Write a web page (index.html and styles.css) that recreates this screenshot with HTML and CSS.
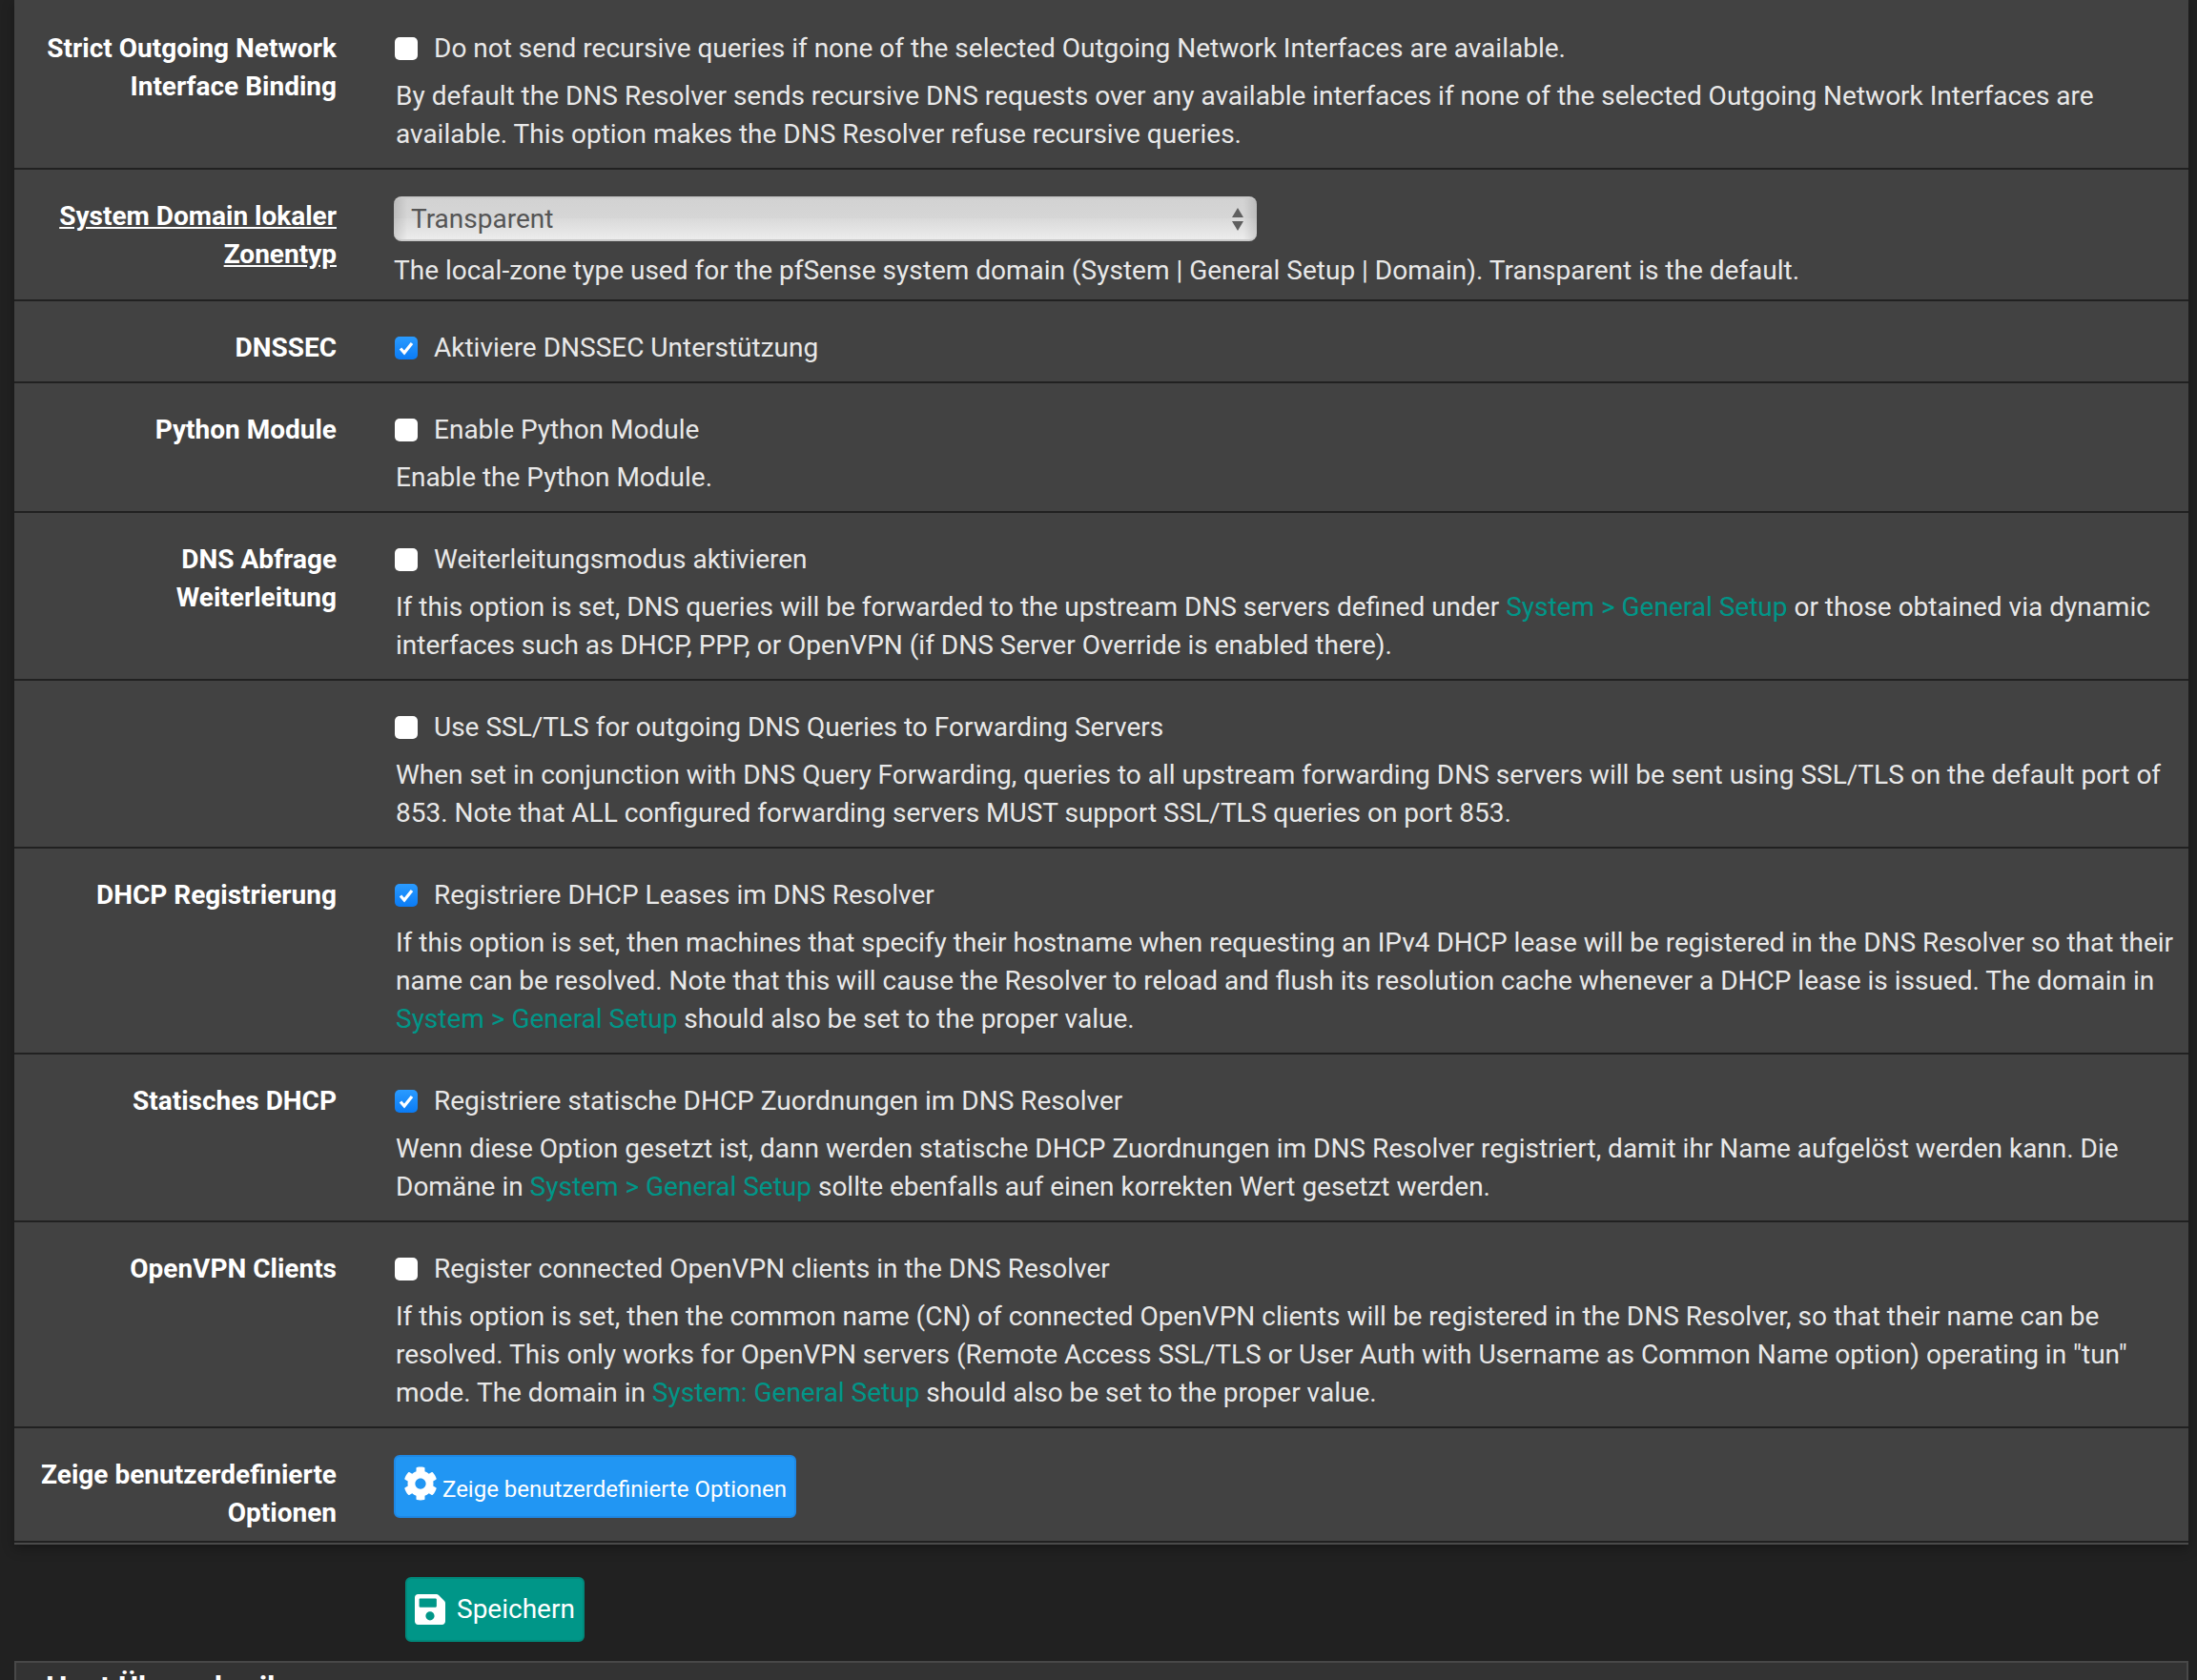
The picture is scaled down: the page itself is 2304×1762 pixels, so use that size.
FILE: index.html
```html
<!DOCTYPE html>
<html lang="en">
<head>
    <meta charset="UTF-8">
    <meta name="viewport" content="width=device-width, initial-scale=1.0">
    <title>DNS Resolver</title>
    <link rel="stylesheet" href="styles.css">
</head>
<body>
    <div class="panel">
        <div class="row">
            <div class="label">Strict Outgoing Network Interface Binding</div>
            <div class="field">
                <label class="check"><span class="box"></span>Do not send recursive queries if none of the selected Outgoing Network Interfaces are available.</label>
                <p class="help">By default the DNS Resolver sends recursive DNS requests over any available interfaces if none of the selected Outgoing Network Interfaces are available. This option makes the DNS Resolver refuse recursive queries.</p>
            </div>
        </div>
        <div class="row row-select">
            <div class="label"><span class="underline">System Domain lokaler Zonentyp</span></div>
            <div class="field">
                <div class="select">
                    <span>Transparent</span>
                    <svg class="arrows" width="14" height="24" viewBox="0 0 14 24"><path d="M7 0l6 10H1zM7 24L1 14h12z" fill="#5f5f5f"/></svg>
                </div>
                <p class="help help-tight">The local-zone type used for the pfSense system domain (System | General Setup | Domain). Transparent is the default.</p>
            </div>
        </div>
        <div class="row">
            <div class="label">DNSSEC</div>
            <div class="field">
                <label class="check"><span class="box on"><svg width="24" height="24" viewBox="0 0 24 24"><path d="M6 12.500l4 4.500 8-10" fill="none" stroke="#fff" stroke-width="3.200"/></svg></span>Aktiviere DNSSEC Unterstützung</label>
            </div>
        </div>
        <div class="row">
            <div class="label">Python Module</div>
            <div class="field">
                <label class="check"><span class="box"></span>Enable Python Module</label>
                <p class="help">Enable the Python Module.</p>
            </div>
        </div>
        <div class="row">
            <div class="label">DNS Abfrage Weiterleitung</div>
            <div class="field">
                <label class="check"><span class="box"></span>Weiterleitungsmodus aktivieren</label>
                <p class="help">If this option is set, DNS queries will be forwarded to the upstream DNS servers defined under <a href="#">System &gt; General Setup</a> or those obtained via dynamic interfaces such as DHCP, PPP, or OpenVPN (if DNS Server Override is enabled there).</p>
            </div>
        </div>
        <div class="row">
            <div class="label"></div>
            <div class="field">
                <label class="check"><span class="box"></span>Use SSL/TLS for outgoing DNS Queries to Forwarding Servers</label>
                <p class="help">When set in conjunction with DNS Query Forwarding, queries to all upstream forwarding DNS servers will be sent using SSL/TLS on the default port of 853. Note that ALL configured forwarding servers MUST support SSL/TLS queries on port 853.</p>
            </div>
        </div>
        <div class="row">
            <div class="label">DHCP Registrierung</div>
            <div class="field">
                <label class="check"><span class="box on"><svg width="24" height="24" viewBox="0 0 24 24"><path d="M6 12.500l4 4.500 8-10" fill="none" stroke="#fff" stroke-width="3.200"/></svg></span>Registriere DHCP Leases im DNS Resolver</label>
                <p class="help">If this option is set, then machines that specify their hostname when requesting an IPv4 DHCP lease will be registered in the DNS Resolver so that their name can be resolved. Note that this will cause the Resolver to reload and flush its resolution cache whenever a DHCP lease is issued. The domain in <a href="#">System &gt; General Setup</a> should also be set to the proper value.</p>
            </div>
        </div>
        <div class="row">
            <div class="label">Statisches DHCP</div>
            <div class="field">
                <label class="check"><span class="box on"><svg width="24" height="24" viewBox="0 0 24 24"><path d="M6 12.500l4 4.500 8-10" fill="none" stroke="#fff" stroke-width="3.200"/></svg></span>Registriere statische DHCP Zuordnungen im DNS Resolver</label>
                <p class="help">Wenn diese Option gesetzt ist, dann werden statische DHCP Zuordnungen im DNS Resolver registriert, damit ihr Name aufgelöst werden kann. Die Domäne in <a href="#">System &gt; General Setup</a> sollte ebenfalls auf einen korrekten Wert gesetzt werden.</p>
            </div>
        </div>
        <div class="row">
            <div class="label">OpenVPN Clients</div>
            <div class="field">
                <label class="check"><span class="box"></span>Register connected OpenVPN clients in the DNS Resolver</label>
                <p class="help">If this option is set, then the common name (CN) of connected OpenVPN clients will be registered in the DNS Resolver, so that their name can be resolved. This only works for OpenVPN servers (Remote Access SSL/TLS or User Auth with Username as Common Name option) operating in "tun" mode. The domain in <a href="#">System: General Setup</a> should also be set to the proper value.</p>
            </div>
        </div>
        <div class="row row-last">
            <div class="label">Zeige benutzerdefinierte Optionen</div>
            <div class="field">
                <a class="btn btn-blue" href="#">
                    <svg width="36" height="36" viewBox="0 0 512 512"><path fill="#fff" d="M487.400 315.700l-42.600-24.600c4.300-23.200 4.300-47 0-70.200l42.600-24.600c4.900-2.800 7.100-8.600 5.500-14-11.100-35.600-30-67.800-54.700-94.600-3.800-4.100-10-5.100-14.800-2.300L380.800 110c-17.900-15.400-38.500-27.300-60.800-35.100V25.800c0-5.600-3.900-10.500-9.400-11.700-36.700-8.200-74.300-7.800-109.200 0-5.500 1.200-9.400 6.100-9.400 11.700V75c-22.200 7.900-42.800 19.800-60.800 35.100L88.700 85.500c-4.900-2.800-11-1.900-14.800 2.300-24.700 26.700-43.600 58.900-54.700 94.600-1.700 5.400.6 11.200 5.500 14L67.300 221c-4.300 23.200-4.300 47 0 70.200l-42.600 24.600c-4.900 2.800-7.100 8.600-5.500 14 11.100 35.600 30 67.800 54.700 94.600 3.800 4.100 10 5.100 14.800 2.300l42.600-24.600c17.900 15.400 38.500 27.300 60.800 35.100v49.200c0 5.600 3.900 10.500 9.400 11.700 36.700 8.200 74.300 7.800 109.200 0 5.500-1.200 9.400-6.100 9.400-11.700v-49.200c22.200-7.900 42.800-19.800 60.800-35.100l42.600 24.600c4.900 2.800 11 1.900 14.800-2.300 24.700-26.700 43.600-58.900 54.700-94.600 1.500-5.500-.7-11.300-5.600-14.100zM256 336c-44.100 0-80-35.900-80-80s35.900-80 80-80 80 35.900 80 80-35.900 80-80 80z"/></svg>
                    <span class="btn-blue-text">Zeige benutzerdefinierte Optionen</span>
                </a>
            </div>
        </div>
    </div>
    <div class="actions">
        <a class="btn btn-green" href="#">
            <svg width="32" height="32" viewBox="0 32 448 448"><path fill="#fff" d="M433.941 129.941l-83.882-83.882A48 48 0 0 0 316.118 32H48C21.490 32 0 53.490 0 80v352c0 26.510 21.490 48 48 48h352c26.510 0 48-21.490 48-48V163.882a48 48 0 0 0-14.059-33.941zM224 416c-35.346 0-64-28.654-64-64 0-35.346 28.654-64 64-64s64 28.654 64 64c0 35.346-28.654 64-64 64zm96-304.520V212c0 6.627-5.373 12-12 12H76c-6.627 0-12-5.373-12-12V108c0-6.627 5.373-12 12-12h228.520c3.183 0 6.235 1.264 8.485 3.515l3.480 3.480A11.996 11.996 0 0 1 320 111.480z"/></svg>
            <span>Speichern</span>
        </a>
    </div>
    <div class="panel-next">
        <h2>Host Überschreibungen</h2>
    </div>
</body>
</html>
```

FILE: styles.css
```css
body {
    margin: 0;
    height: 1762px;
    overflow: hidden;
    background-color: #212121;
    color: #e8e8e8;
    font-family: Roboto, "Noto Sans", sans-serif;
    font-size: 28px;
    line-height: 40px;
}
a {
    color: #009688;
    text-decoration: none;
}
.panel {
    margin: 0 9px 0 15px;
    padding-top: 2px;
    background-color: #424242;
    border-bottom: 2px solid #4a4a4a;
    box-shadow: 0 4px 12px rgba(0, 0, 0, 0.3);
}
.row {
    display: flex;
    padding: 29px 0 15px;
    border-bottom: 2px solid #212121;
}
.row-select {
    padding-bottom: 10px;
}
.row-last {
    height: 89px;
    padding-bottom: 0;
}
.label {
    flex: none;
    box-sizing: border-box;
    width: 338px;
    padding-left: 15px;
    text-align: right;
    font-weight: 700;
    color: #fff;
}
.underline {
    text-decoration: underline;
}
.field {
    flex: 1;
    margin-left: 60px;
    padding-right: 15px;
}
.check {
    display: flex;
    align-items: center;
    margin-left: 1px;
}
.box {
    flex: none;
    width: 24px;
    height: 24px;
    margin-right: 17px;
    border-radius: 5px;
    background-color: #fff;
}
.box.on {
    background: linear-gradient(#2a9bff, #0a7bf5);
}
.box svg {
    display: block;
}
.help {
    margin: 10px 0 0 2px;
}
.help-tight {
    margin: 11px 0 0;
}
.select {
    display: flex;
    align-items: center;
    justify-content: space-between;
    box-sizing: border-box;
    width: 905px;
    height: 47px;
    margin-top: -1px;
    padding: 0 13px 0 18px;
    border-radius: 8px;
    border-top: 2px solid #c9c9c9;
    border-bottom: 2px solid #c9c9c9;
    color: #555;
    background:
        linear-gradient(90deg, rgba(0, 0, 0, 0.12), transparent 14px, transparent calc(100% - 14px), rgba(0, 0, 0, 0.12)),
        linear-gradient(#d2d2d2 0, #d6d6d6 50%, #dadada 50%, #ececec 100%);
}
.btn {
    display: inline-flex;
    align-items: center;
    box-sizing: border-box;
    border-radius: 6px;
    color: #fff;
    white-space: nowrap;
}
.btn svg {
    flex: none;
}
.btn-blue {
    width: 422px;
    height: 66px;
    margin-top: -1px;
    padding-left: 8px;
    background-color: #2196f3;
    border: 2px solid #1e88e5;
    font-size: 24px;
}
.btn-blue svg {
    margin-bottom: 6px;
    margin-right: 5px;
}
.btn-blue-text {
    margin-top: 6px;
}
.actions {
    padding: 34px 0 0 425px;
}
.btn-green {
    width: 188px;
    height: 68px;
    padding-left: 8px;
    gap: 12px;
    background-color: #009688;
    border: 2px solid #00897b;
}
.panel-next {
    margin: 20px 9px 0 15px;
    padding-left: 31px;
    height: 60px;
    background-color: #333;
    border: 2px solid #484848;
}
.panel-next h2 {
    margin: 0;
    padding-top: 5px;
    font-size: 32px;
    line-height: 40px;
    font-weight: 700;
    color: #fff;
}
```
